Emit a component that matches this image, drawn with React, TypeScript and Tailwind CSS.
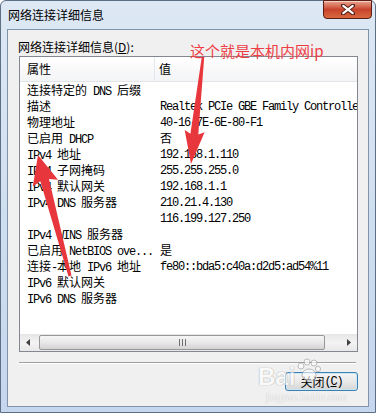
import React from "react";

const rows: [string, string][] = [
  ["连接特定的 DNS 后缀", ""],
  ["描述", "Realtek PCIe GBE Family Controller"],
  ["物理地址", "40-16-7E-6E-80-F1"],
  ["已启用 DHCP", "否"],
  ["IPv4 地址", "192.168.1.110"],
  ["IPv4 子网掩码", "255.255.255.0"],
  ["IPv4 默认网关", "192.168.1.1"],
  ["IPv4 DNS 服务器", "210.21.4.130"],
  ["", "116.199.127.250"],
  ["IPv4 WINS 服务器", ""],
  ["已启用 NetBIOS ove...", "是"],
  ["连接-本地 IPv6 地址", "fe80::bda5:c40a:d2d5:ad54%11"],
  ["IPv6 默认网关", ""],
  ["IPv6 DNS 服务器", ""],
];

// SimSun-like mix: CJK in Noto, latin half-width mono
function Sim({ t }: { t: string }) {
  return (
    <>
      {t.split(/([\u4e00-\u9fff]+)/).map((s, i) =>
        i % 2 ? (
          <span key={i} className="font-['Noto_Sans_CJK_SC']">
            {s}
          </span>
        ) : (
          <span key={i} className="font-['Liberation_Mono'] tracking-[-1.2px]">
            {s}
          </span>
        )
      )}
    </>
  );
}

function arrow(
  x1: number,
  y1: number,
  x2: number,
  y2: number,
  headLen: number,
  headHalf: number,
  tailHalf: number,
  neckHalf: number
) {
  const dx = x2 - x1;
  const dy = y2 - y1;
  const L = Math.hypot(dx, dy);
  const ux = dx / L;
  const uy = dy / L;
  const nx = -uy;
  const ny = ux;
  const bx = x2 - ux * headLen;
  const by = y2 - uy * headLen;
  const wx = bx - ux * 3;
  const wy = by - uy * 3;
  const pts = [
    [x1 + nx * tailHalf, y1 + ny * tailHalf],
    [bx + nx * neckHalf, by + ny * neckHalf],
    [wx + nx * headHalf, wy + ny * headHalf],
    [x2, y2],
    [wx - nx * headHalf, wy - ny * headHalf],
    [bx - nx * neckHalf, by - ny * neckHalf],
    [x1 - nx * tailHalf, y1 - ny * tailHalf],
  ];
  return pts.map((p) => p[0].toFixed(1) + "," + p[1].toFixed(1)).join(" ");
}

export default function App() {
  return (
    <div className="relative w-[376px] h-[413px] overflow-hidden bg-white">
      <div className="flex flex-col w-[376px] h-[413px] border border-[#5f6f83] rounded-t-[6px] bg-gradient-to-b from-[#dde8f4] via-[#d0dff0] to-[#c4d7ee]">
        {/* title bar */}
        <div className="flex justify-between h-[28px]">
          <div className="pl-[7px] pt-[6px] text-[12px] leading-[16px] text-black font-['Noto_Sans_CJK_SC']">
            网络连接详细信息
          </div>
          <div className="mt-[-1px] mr-[3px] w-[49px] h-[19px] rounded-b-[4px] border border-[#5b1e14] bg-gradient-to-b from-[#e9a590] via-[#c8432b] to-[#d9673f] flex items-center justify-center shadow-[inset_0_1px_0_rgba(255,255,255,0.5)]">
            <svg width="14" height="11" viewBox="0 0 14 11">
              <path d="M2 1.5 L12 9.5 M12 1.5 L2 9.5" stroke="#4a1a12" strokeWidth="4" strokeLinecap="round" />
              <path d="M2.3 1.8 L11.7 9.2 M11.7 1.8 L2.3 9.2" stroke="#ffffff" strokeWidth="2.2" strokeLinecap="round" />
            </svg>
          </div>
        </div>

        {/* client area */}
        <div className="mx-[6px] w-[362px] h-[378px] border border-[#8093ab] bg-[#f0f0f0] flex flex-col">
          <div className="ml-[10px] mt-[8px] h-[18px] text-[12px] leading-[18px] text-black font-['Noto_Sans_CJK_SC']">
            网络连接详细信息(<span className="underline">D</span>):
          </div>

          <div className="ml-[11px] w-[339px] h-[296px] border border-[#828790] bg-white flex flex-col text-[12px] text-black">
            <div className="flex h-[25px] shrink-0 border-b border-[#e2e4e8] bg-gradient-to-b from-white to-[#f3f4f6] font-['Noto_Sans_CJK_SC'] leading-[24px]">
              <div className="w-[135px] pl-[7px] border-r border-[#e3e8ee]">属性</div>
              <div className="pl-[4px]">值</div>
            </div>

            <div className="flex-1 overflow-hidden">
              {rows.map(([k, v], i) => (
                <div key={i} className="flex h-[16px] leading-[16px] whitespace-nowrap">
                  <div className="w-[140px] shrink-0 pl-[7px]">
                    <Sim t={k} />
                  </div>
                  <div>
                    <Sim t={v} />
                  </div>
                </div>
              ))}
            </div>

            {/* horizontal scrollbar */}
            <div className="flex items-center h-[17px] shrink-0 bg-gradient-to-b from-[#e6e6e6] via-[#f3f3f3] to-[#e8e8e8]">
              <div className="w-[17px] h-[17px] flex items-center justify-center">
                <svg width="5" height="7" viewBox="0 0 5 7">
                  <path d="M4 0 L0 3.5 L4 7 Z" fill="#404040" />
                </svg>
              </div>
              <div className="ml-[2px] w-[286px] h-[15px] rounded-[2px] border border-[#979797] bg-gradient-to-b from-[#f6f6f6] via-[#e8e8e8] to-[#d3d3d3] flex items-center justify-center">
                <div className="flex gap-[2px]">
                  <div className="w-px h-[7px] bg-[#707070]" />
                  <div className="w-px h-[7px] bg-[#707070]" />
                  <div className="w-px h-[7px] bg-[#707070]" />
                </div>
              </div>
              <div className="ml-auto w-[17px] h-[17px] flex items-center justify-center">
                <svg width="5" height="7" viewBox="0 0 5 7">
                  <path d="M1 0 L5 3.5 L1 7 Z" fill="#404040" />
                </svg>
              </div>
            </div>
          </div>

          <div className="ml-[11px] mt-[10px] w-[337px] border-t border-b border-t-[#a0a0a0] border-b-white" />

          <div className="ml-auto mr-[10px] mt-[8px] w-[73px] h-[19px] rounded-[3px] border border-[#3c7fb1] bg-gradient-to-b from-[#f4f4f4] via-[#e9e9e9] to-[#d6d6d6] shadow-[inset_0_0_0_1px_rgba(200,232,250,0.9)] flex items-center justify-center text-[12px] leading-[16px] text-black">
            <span className="font-['Noto_Sans_CJK_SC']">关闭</span>
            <span className="font-['Liberation_Mono'] tracking-[-1.2px]">
              (<span className="underline">C</span>)
            </span>
          </div>
        </div>
      </div>

      {/* baidu watermark */}
      <div className="absolute left-[258px] top-[358px] opacity-60 pointer-events-none">
        <div className="flex items-end">
          <span className="text-[24px] leading-[30px] font-bold text-white font-['Liberation_Sans'] [text-shadow:0_0_1px_#8a8a8a,0_0_1px_#8a8a8a]">
            Bai
          </span>
          <svg width="26" height="26" viewBox="0 0 26 26" className="mb-[8px]">
            <g fill="#ffffff" stroke="#9a9a9a" strokeWidth="1">
              <circle cx="6" cy="8" r="3" />
              <circle cx="12" cy="4" r="3" />
              <circle cx="19" cy="5" r="3" />
              <circle cx="23" cy="11" r="2.6" />
              <ellipse cx="14" cy="17" rx="7" ry="6" />
            </g>
          </svg>
        </div>
        <div className="ml-[8px] text-[10px] leading-[12px] text-white font-['Liberation_Sans'] [text-shadow:0_0_1px_#8a8a8a]">
          jingyan.baidu.com
        </div>
      </div>

      {/* red annotation */}
      <div className="absolute left-[190px] top-[43px] text-[15px] leading-[16px] text-[#ef3d45] font-['Noto_Sans_CJK_SC'] whitespace-nowrap">
        这个就是本机内网ip
      </div>
      <svg className="absolute left-0 top-0 pointer-events-none" width="376" height="413">
        <polygon points={arrow(203, 57, 191, 164, 30, 10, 1.2, 4)} fill="#e8373c" />
        <polygon points={arrow(70, 276, 38, 155, 26, 13, 1.5, 4.5)} fill="#e8373c" />
      </svg>
    </div>
  );
}
